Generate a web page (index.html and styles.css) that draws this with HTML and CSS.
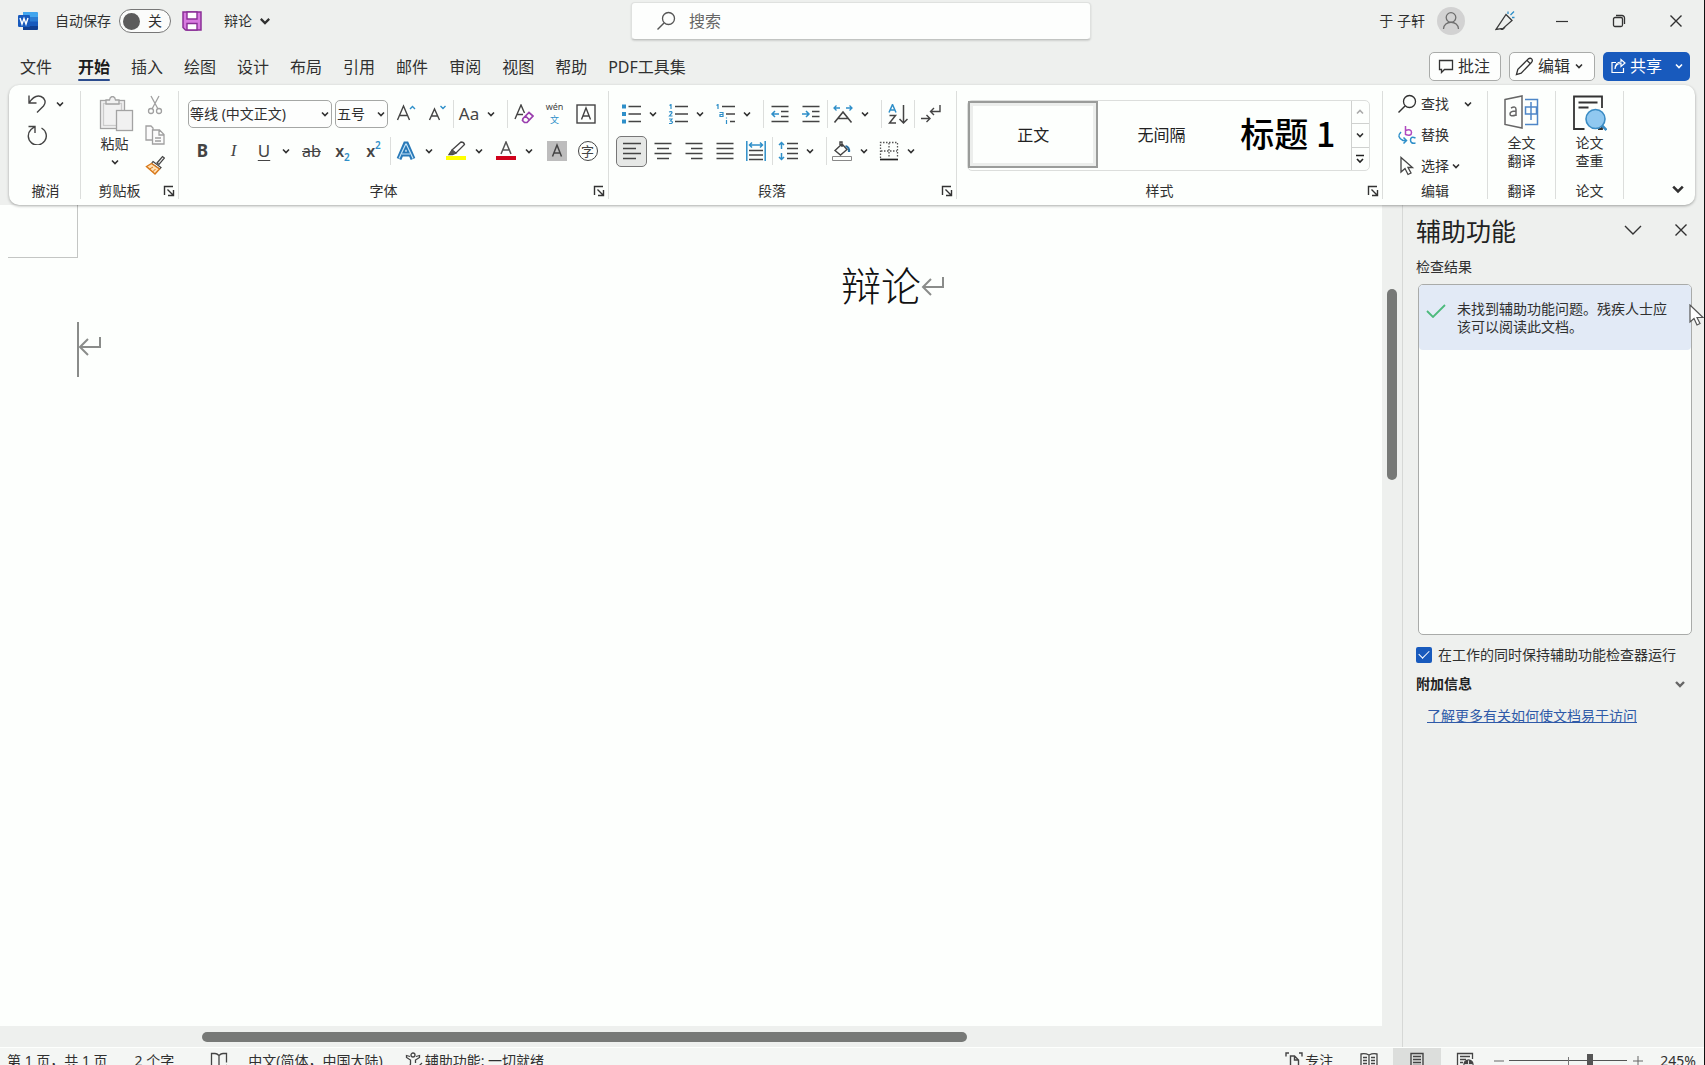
FILE: index.html
```html
<!DOCTYPE html>
<html lang="zh-CN">
<head>
<meta charset="utf-8">
<title>辩论 - Word</title>
<link rel="stylesheet" href="styles.css">
</head>
<body>
<svg class="defs" aria-hidden="true">
  <symbol id="chev" viewBox="0 0 10 10"><path d="M2 3.5 5 6.5 8 3.5" fill="none" stroke="currentColor" stroke-width="1.6"/></symbol>
  <symbol id="launch" viewBox="0 0 12 12"><path d="M1.5 10V1.500H10M4.500 4.500 10 10M10.500 5V10.500H5" fill="none" stroke="currentColor" stroke-width="1.400"/></symbol>
  <symbol id="find" viewBox="0 0 20 20"><path d="M8 12 1.500 18.500" stroke="currentColor" stroke-width="1.400"/><circle cx="12.500" cy="7.500" r="6" fill="none" stroke="currentColor" stroke-width="1.300"/></symbol>
  <symbol id="close" viewBox="0 0 14 14"><path d="M1.500 1.500 12.500 12.500M12.500 1.500 1.500 12.500" stroke="currentColor" stroke-width="1.400"/></symbol>
  <symbol id="mark" viewBox="0 0 24 22"><path d="M22 1V11H2M10 3 2 11 10 19" fill="none" stroke="currentColor" stroke-width="2"/></symbol>
</svg>
<div class="app">
  <header class="titlebar">
    <div class="title-left">
      <svg class="word" viewBox="0 0 20 20"><rect x="5" y="1" width="15" height="18" rx="1.500" fill="#2b7cd3"/><path d="M5 1h13.500A1.500 1.500 0 0 1 20 2.500V6H5z" fill="#41a5ee"/><path d="M5 10.500h15V15H5z" fill="#185abd"/><path d="M5 15h15v2.500a1.500 1.500 0 0 1-1.500 1.500H5z" fill="#103f91"/><rect y="4" width="12" height="12" rx="1.200" fill="#185abd"/><path d="M2 7 4 13 6 7.500 8 13 10 7" fill="none" stroke="#fff" stroke-width="1.400"/></svg>
      <label class="auto" for="autosave">自动保存</label>
      <button class="toggle" id="autosave" type="button" role="switch" aria-checked="false"><i></i><span>关</span></button>
      <button class="plain save" type="button" aria-label="保存"><svg viewBox="0 0 20 20"><path d="M1 1h18v18H3.500L1 16.500z" fill="#d87be0" stroke="#8a2f96" stroke-width="1.500"/><path d="M5 1h10v7H5zM5 12.500h10V19H5z" fill="#fff" stroke="#8a2f96" stroke-width="1.400"/></svg></button>
      <button class="plain docname" type="button">辩论<svg viewBox="0 0 10 10"><use href="#chev"/></svg></button>
    </div>
    <label class="search"><svg viewBox="0 0 20 20"><use href="#find"/></svg><input type="text" placeholder="搜索" aria-label="搜索"></label>
    <div class="title-right">
      <span class="user">于 子轩</span>
      <svg class="avatar" viewBox="0 0 28 28"><circle cx="14" cy="14" r="14" fill="#d2d2d2"/><g fill="none" stroke="#6e6e6e" stroke-width="1.300"><circle cx="14" cy="10.500" r="4.800"/><path d="M6.500 22c0-9 15-9 15 0"/></g></svg>
      <button class="win" type="button" aria-label="画笔"><svg viewBox="0 0 20 20" fill="none" stroke="#3a3a3a" stroke-width="1.300"><path d="M11 3.500 17 9.500 8 17.500 1 18.500zM5.500 17.500q2 2.500 4.500-1.500"/><path d="M13 3V.5M15.500 4 19 .5M17 6.500h2.500" stroke="#2e8fc9"/></svg></button>
      <button class="win" type="button" aria-label="最小化"><svg viewBox="0 0 20 20"><path d="M4 10.500h12" stroke="#333" stroke-width="1.200"/></svg></button>
      <button class="win" type="button" aria-label="还原"><svg viewBox="0 0 20 20" fill="none" stroke="#333" stroke-width="1.300"><rect x="4.500" y="6.500" width="9" height="9" rx="1.500"/><path d="M7 4.500h6a2.500 2.500 0 0 1 2.500 2.500v6"/></svg></button>
      <button class="win" type="button" aria-label="关闭"><svg class="x" viewBox="0 0 14 14"><use href="#close"/></svg></button>
    </div>
  </header>

  <nav class="tabs">
    <button type="button">文件</button>
    <button type="button" class="on">开始</button>
    <button type="button">插入</button>
    <button type="button">绘图</button>
    <button type="button">设计</button>
    <button type="button">布局</button>
    <button type="button">引用</button>
    <button type="button">邮件</button>
    <button type="button">审阅</button>
    <button type="button">视图</button>
    <button type="button">帮助</button>
    <button type="button">PDF工具集</button>
    <div class="actions">
      <button class="act comment" type="button"><svg viewBox="0 0 16 16"><path d="M1.500 2.500h13v9H6.500L3.500 14.500V11.500h-2z" fill="none" stroke="#333" stroke-width="1.300"/></svg>批注</button>
      <button class="act edit" type="button"><svg class="pen" viewBox="0 0 20 20"><path d="M1.500 18.500 3 13 14 2q2-1.500 3.500 0t0 3.500L6.500 17zM12.500 3.500l4 4" fill="none" stroke="#333" stroke-width="1.400"/></svg>编辑<svg class="cv" viewBox="0 0 10 10"><use href="#chev"/></svg></button>
      <button class="act share" type="button"><svg viewBox="0 0 16 16"><path d="M6 4.500H2v10h11.500V10M5 11c.5-4 3-5.500 6-5.500V8.500L15 5 11 1.500V4C7.500 4 5 6.500 5 11z" fill="none" stroke="#fff" stroke-width="1.200"/></svg>共享<svg class="cv" viewBox="0 0 10 10"><use href="#chev"/></svg></button>
    </div>
  </nav>

  <section class="ribbon">
    <div class="group undo">
      <div class="stack">
        <div class="line"><button class="small" type="button" aria-label="撤消"><svg viewBox="0 0 20 20"><path d="M2 1.500V9h7.500M2 9C5.500 3.500 10 1 14 2.500s5.500 6 2.500 9.500L10 18.500" fill="none" stroke="#444" stroke-width="1.400"/></svg></button><button class="cvb" type="button" aria-label="更多"><svg><use href="#chev"/></svg></button></div>
        <div class="line"><button class="small" type="button" aria-label="重做"><svg viewBox="0 0 20 20"><path d="M1.500 1.500H8V8M14.500 3A9 9 0 1 1 4 4.500L8 1.500" fill="none" stroke="#444" stroke-width="1.400"/></svg></button></div>
      </div>
      <div class="cap"><span>撤消</span></div>
    </div>

    <div class="group clip">
      <div class="side">
        <button class="big" type="button"><svg class="i35" viewBox="0 0 35 36" fill="#f1f1f1" stroke="#a3a3a3" stroke-width="1.300"><rect x="1.500" y="4.500" width="24" height="28"/><rect x="4.500" y="7.500" width="18" height="22" stroke="#ccc"/><path d="M7 8V4h3.500q.5-3.500 3-3.500T16.500 4H20v4z"/><rect x="17.500" y="14.500" width="16" height="20"/></svg><span>粘贴</span><svg class="cv" viewBox="0 0 10 10"><use href="#chev"/></svg></button>
        <div class="stack">
          <button class="small" type="button" aria-label="剪切"><svg viewBox="0 0 20 20" fill="none" stroke="#a0a0a0" stroke-width="1.300"><path d="M6 1 13 14M14 1 7 14"/><circle cx="6" cy="16" r="2.500"/><circle cx="14" cy="16" r="2.500"/></svg></button>
          <button class="small" type="button" aria-label="复制"><svg viewBox="0 0 20 20" fill="#fbfbfb" stroke="#a0a0a0" stroke-width="1.300"><path d="M7 15H1V1h5l2 2v2"/><path d="M7.500 5h7L19 9.500V19H7.500zM14 5v5h5M10 13h6M10 16h6"/></svg></button>
          <button class="small" type="button" aria-label="格式刷"><svg viewBox="0 0 20 20"><path d="M12 8 17.500 1.500 19.500 3 14 9.500z" fill="#eee" stroke="#444" stroke-width="1.200"/><path d="M8 6.500 16 12.500 14.500 14 6.500 8.500z" fill="#fff" stroke="#444" stroke-width="1.200"/><path d="M6.500 8.500 14.500 14 10 19 1.500 11.500z" fill="#ffe0b5" stroke="#d9791a" stroke-width="1.400"/><path d="M4.500 14 8 12M7.500 17l3-3" stroke="#d9791a"/></svg></button>
        </div>
      </div>
      <div class="cap"><span>剪贴板</span><button class="launch" type="button" aria-label="剪贴板设置"><svg><use href="#launch"/></svg></button></div>
    </div>

    <div class="group font">
      <div class="rows">
        <div class="row first">
          <button class="combo name" type="button" role="combobox" aria-label="字体">等线 (中文正文)<svg><use href="#chev"/></svg></button>
          <button class="combo size" type="button" role="combobox" aria-label="字号">五号<svg><use href="#chev"/></svg></button>
          <button class="ib" type="button" aria-label="增大字号"><svg viewBox="0 0 20 20" fill="none" stroke="#444" stroke-width="1.400"><path d="M1.500 16 7.500 2 13.500 16M3.500 11.500h8"/><path d="M14 5 16.500 2.500 19 5" stroke="#2e8fc9"/></svg></button>
          <button class="ib" type="button" aria-label="减小字号"><svg viewBox="0 0 20 20" fill="none" stroke="#444" stroke-width="1.400"><path d="M2.500 16 7.500 5 12.500 16M4.500 12h6"/><path d="M13.500 2 16 4.500 18.500 2" stroke="#2e8fc9"/></svg></button>
          <i class="sep"></i>
          <div class="split"><button class="ib t17" type="button">Aa</button><button class="cvb" type="button" aria-label="更多"><svg><use href="#chev"/></svg></button></div>
          <i class="sep"></i>
          <button class="ib" type="button" aria-label="清除格式"><svg viewBox="0 0 20 20" fill="none" stroke="#444" stroke-width="1.400"><path d="M1 15 7 1 10.500 9M3 10.500h6"/><path d="M9 14.500 15 8.500 19 12 13 18.500H10.500L8.500 16.500zM11.500 12l4 4" stroke="#9a3fae" stroke-width="1.700"/></svg></button>
          <button class="ib pinyin" type="button"><span>wén</span><b>文</b></button>
          <button class="ib" type="button" aria-label="字符边框"><svg viewBox="0 0 20 20" fill="none" stroke="#444" stroke-width="1.400"><rect x="1" y="1" width="18" height="18"/><path d="M5.500 15.500 10 4 14.500 15.500M7 12h6"/></svg></button>
        </div>
        <div class="row">
          <button class="ib t17 bold" type="button">B</button>
          <button class="ib t17 ital" type="button">I</button>
          <div class="split"><button class="ib t17 under" type="button">U</button><button class="cvb" type="button" aria-label="更多"><svg><use href="#chev"/></svg></button></div>
          <button class="ib t16 strike" type="button">ab</button>
          <button class="ib script" type="button">x<sub>2</sub></button>
          <button class="ib script" type="button">x<sup>2</sup></button>
          <i class="sep"></i>
          <div class="split wide"><button class="ib" type="button" aria-label="文本效果"><svg viewBox="0 0 20 20" fill="none"><path d="M3 18 9.500 3h1L17 18M5.500 13h9" stroke="#2879b8" stroke-width="5"/><path d="M3 17.500 9.700 3h.6L17 17.500M6 13h8" stroke="#c6e4f7" stroke-width="1.200"/></svg></button><button class="cvb" type="button" aria-label="更多"><svg><use href="#chev"/></svg></button></div>
          <div class="split wide"><button class="ib" type="button" aria-label="突出显示"><svg viewBox="0 0 20 20"><path d="M0 15h20v4H0z" fill="#ff0"/><path d="M6 9 15 1q3 0 3.500 2.500L10 12zM6 9l-3 4.500h3.500L10 12z" fill="#fff" stroke="#444" stroke-width="1.300"/><path d="M6 9 3 13.500h3.500L10 12z" fill="#555"/></svg></button><button class="cvb" type="button" aria-label="更多"><svg><use href="#chev"/></svg></button></div>
          <div class="split wide"><button class="ib" type="button" aria-label="字体颜色"><svg viewBox="0 0 20 20"><path d="M0 15h20v4H0z" fill="#d0021b"/><path d="M5 13 10 1 15 13M7 9h6" fill="none" stroke="#555" stroke-width="1.500"/></svg></button><button class="cvb" type="button" aria-label="更多"><svg><use href="#chev"/></svg></button></div>
          <button class="ib" type="button" aria-label="字符底纹"><svg viewBox="0 0 20 20"><path d="M0 0h20v20H0z" fill="#bdbdbd"/><path d="M5.500 15.500 10 4 14.500 15.500M7 12h6" fill="none" stroke="#444" stroke-width="1.500"/></svg></button>
          <button class="ib" type="button"><span class="ring">字</span></button>
        </div>
      </div>
      <div class="cap"><span>字体</span><button class="launch" type="button" aria-label="字体设置"><svg><use href="#launch"/></svg></button></div>
    </div>

    <div class="group para">
      <div class="rows">
        <div class="row">
          <div class="split"><button class="ib" type="button" aria-label="项目符号"><svg viewBox="0 0 20 20"><path d="M7.500 2.500H20M7.500 10H20M7.500 17.500H20" stroke="#444" stroke-width="1.500"/><path d="M1 .5h4v4H1zM1 8h4v4H1zM1 15.500h4v4H1z" fill="#2e8fc9"/></svg></button><button class="cvb" type="button" aria-label="更多"><svg><use href="#chev"/></svg></button></div>
          <div class="split"><button class="ib" type="button" aria-label="编号"><svg viewBox="0 0 20 20"><path d="M7 2.500H20M7 10H20M7 17.500H20" stroke="#444" stroke-width="1.500"/><path d="M1.500 1.500 3 .5V5M1 8q3-1 3 .8L1.500 12H4.500M1 15h3L2.500 17Q6 17.500 3.500 19.500H1" fill="none" stroke="#2e8fc9" stroke-width="1.200"/></svg></button><button class="cvb" type="button" aria-label="更多"><svg><use href="#chev"/></svg></button></div>
          <div class="split"><button class="ib" type="button" aria-label="多级列表"><svg viewBox="0 0 20 20"><path d="M7 2.500H20M11 10H20M15 17.500H20" stroke="#444" stroke-width="1.500"/><path d="M1.500 1.500 3 .5V5M4.500 8.500h3.500V12.500H5V10.500h3M11.500 16V20M11.500 13.500v1" fill="none" stroke="#2e8fc9" stroke-width="1.200"/></svg></button><button class="cvb" type="button" aria-label="更多"><svg><use href="#chev"/></svg></button></div>
          <i class="sep"></i>
          <button class="ib" type="button" aria-label="减少缩进"><svg viewBox="0 0 20 20" fill="none" stroke="#444" stroke-width="1.500"><path d="M1.500 2.500h17M11 7.500h7.500M11 12.500h7.500M1.500 17.500h17"/><path d="M9 10H2M5 7 2 10l3 3" stroke="#2e8fc9"/></svg></button>
          <button class="ib" type="button" aria-label="增加缩进"><svg viewBox="0 0 20 20" fill="none" stroke="#444" stroke-width="1.500"><path d="M1.500 2.500h17M11 7.500h7.500M11 12.500h7.500M1.500 17.500h17"/><path d="M1 10h7M5 7l3 3-3 3" stroke="#2e8fc9"/></svg></button>
          <i class="sep"></i>
          <div class="split"><button class="ib" type="button" aria-label="中文版式"><svg viewBox="0 0 20 20" fill="none" stroke="#444" stroke-width="1.600"><path d="M1.500 18.500 10 8l8.500 10.500M5 14.500h10"/><path d="M7 4H1M3.500 1.500 1 4l2.500 2.500M13 4h6M16.500 1.500 19 4l-2.500 2.500" stroke="#2e8fc9" stroke-width="1.300"/></svg></button><button class="cvb" type="button" aria-label="更多"><svg><use href="#chev"/></svg></button></div>
          <i class="sep"></i>
          <button class="ib" type="button" aria-label="排序"><svg viewBox="0 0 20 20" fill="none" stroke="#444" stroke-width="1.500"><path d="M1.500 11.500h6L1.500 19h6.500M15.500 1v18M11.500 15l4 4 4-4"/><path d="M1 8.500 4.500.5 8 8.500M2.500 6h4" stroke="#2e8fc9"/></svg></button>
          <i class="sep"></i>
          <button class="ib" type="button" aria-label="显示编辑标记"><svg viewBox="0 0 20 20" fill="none" stroke="#444" stroke-width="1.400"><path d="M19 1v6.500h-9M13 4 9.500 7.500 13 11M0 14.500h9M5.500 11 9 14.500 5.500 18"/></svg></button>
        </div>
        <div class="row">
          <button class="ib sel" type="button" aria-label="左对齐"><svg viewBox="0 0 20 20"><path d="M1 2.500h18M1 7.500h13M1 12.500h18M1 17.500h13" stroke="#444" stroke-width="1.500"/></svg></button>
          <button class="ib" type="button" aria-label="居中"><svg viewBox="0 0 20 20"><path d="M1.500 2.500h17M4 7.500h12M1.500 12.500h17M4 17.500h12" stroke="#444" stroke-width="1.500"/></svg></button>
          <button class="ib" type="button" aria-label="右对齐"><svg viewBox="0 0 20 20"><path d="M1.500 2.500h17M7 7.500h11.500M1.500 12.500h17M7 17.500h11.500" stroke="#444" stroke-width="1.500"/></svg></button>
          <button class="ib" type="button" aria-label="两端对齐"><svg viewBox="0 0 20 20"><path d="M1.500 2.500h17M1.500 7.500h17M1.500 12.500h17M1.500 17.500h17" stroke="#444" stroke-width="1.500"/></svg></button>
          <button class="ib" type="button" aria-label="分散对齐"><svg viewBox="0 0 20 20" fill="none" stroke="#444" stroke-width="1.500"><path d="M3 9.500h14M3 14h14M3 18.500h14"/><path d="M.8 0v20M19.200 0v20M3.500 4h13M6 1.500 3.500 4 6 6.500M14 1.500 16.500 4 14 6.500" stroke="#2e8fc9"/></svg></button>
          <i class="sep"></i>
          <div class="split"><button class="ib" type="button" aria-label="行距"><svg viewBox="0 0 20 20" fill="none" stroke="#444" stroke-width="1.500"><path d="M9 2.500h11M9 7.500h11M9 12.500h11M9 17.500h11"/><path d="M3.500 8V1.500M1 4l2.500-2.500L6 4M3.500 12v6.500M1 16l2.500 2.500L6 16" stroke="#2e8fc9"/></svg></button><button class="cvb" type="button" aria-label="更多"><svg><use href="#chev"/></svg></button></div>
          <i class="sep"></i>
          <div class="split"><button class="ib" type="button" aria-label="底纹"><svg viewBox="0 0 20 20" fill="none" stroke="#444" stroke-width="1.400"><path d="M.5 15.500h19v4H.5z" stroke="#888" stroke-width="1"/><path d="M3 9.500 10 3l5 5.500L8.500 14zM10 6V1H8v4"/><path d="M13.500 5q4 1 3.500 6" stroke="#2e6f9e" stroke-width="2.200"/></svg></button><button class="cvb" type="button" aria-label="更多"><svg><use href="#chev"/></svg></button></div>
          <div class="split"><button class="ib" type="button" aria-label="边框"><svg viewBox="0 0 20 20" fill="none" stroke="#555" stroke-width="1.300"><path d="M1.500 17V1.500h17V17M10 2v15M2 10h16" stroke-dasharray="1.500 1.500"/><path d="M1 18.500h18" stroke="#222" stroke-width="1.700"/></svg></button><button class="cvb" type="button" aria-label="更多"><svg><use href="#chev"/></svg></button></div>
        </div>
      </div>
      <div class="cap"><span>段落</span><button class="launch" type="button" aria-label="段落设置"><svg><use href="#launch"/></svg></button></div>
    </div>

    <div class="group styles">
      <div class="gallery">
        <button class="style on" type="button">正文</button>
        <button class="style" type="button">无间隔</button>
        <button class="style h1" type="button">标题 1</button>
        <div class="scroller">
          <button type="button" aria-label="上一行" class="up"><svg viewBox="0 0 10 10"><use href="#chev"/></svg></button>
          <button type="button" aria-label="下一行"><svg viewBox="0 0 10 10"><use href="#chev"/></svg></button>
          <button type="button" aria-label="其他"><svg viewBox="0 0 10 10"><path d="M1 1.500h8M2 5 5 8 8 5" fill="none" stroke="#222" stroke-width="1.600"/></svg></button>
        </div>
      </div>
      <div class="cap"><span>样式</span><button class="launch" type="button" aria-label="样式设置"><svg><use href="#launch"/></svg></button></div>
    </div>

    <div class="group find">
      <div class="stack">
        <div class="line"><button class="small text" type="button"><svg viewBox="0 0 20 20"><use href="#find"/></svg>查找</button><button class="cvb far" type="button" aria-label="更多"><svg><use href="#chev"/></svg></button></div>
        <div class="line"><button class="small text" type="button"><svg viewBox="0 0 20 20" fill="none" stroke-width="1.500"><path d="M8.500 1v9M8.500 5.500q6-2 6 2t-6 2" stroke="#b04ac0"/><path d="M4 7Q-1 12 6 15.500h3M6.500 12.500l3 3-3 3M18.500 13q-5-2-5 2t5 3" stroke="#2e8fc9"/></svg>替换</button></div>
        <div class="line"><button class="small text" type="button"><svg viewBox="0 0 20 20"><path d="M4 1.500V16l4-3.500 3 6 3-1.500-3-5.500h4.500z" fill="none" stroke="#444" stroke-width="1.300"/></svg>选择</button><button class="cvb" type="button" aria-label="更多"><svg><use href="#chev"/></svg></button></div>
      </div>
      <div class="cap"><span>编辑</span></div>
    </div>

    <div class="group one">
      <button class="big" type="button"><svg class="i35" viewBox="0 0 35 36" fill="none" stroke="#666" stroke-width="1.500"><path d="M1 4.500 18 1v32L1 29.500z"/><path d="M7 13q5-2.500 5 1.500v6.500M12 16q-6 0-6 3t6 1" /><path d="M21 4.500h12.500v25H21M21.500 12h11v7h-11zM27 7v18" stroke="#4e86c8"/></svg><span>全文<br>翻译</span></button>
      <div class="cap"><span>翻译</span></div>
    </div>

    <div class="group one">
      <button class="big" type="button"><svg class="i35" viewBox="0 0 35 36" fill="none" stroke="#333" stroke-width="1.800"><path d="M30 13V1.500H2V34H12.500M26 34h4v-3M6.500 7.500h19M6.500 12.500h10"/><circle cx="23.500" cy="24" r="9.500" fill="#90c8f0" stroke="#3b8cc4" stroke-width="1.600"/><path d="m30 30.500 4.500 4.500" stroke="#3b8cc4" stroke-width="2.600"/></svg><span>论文<br>查重</span></button>
      <div class="cap"><span>论文</span></div>
    </div>

    <button class="fold" type="button" aria-label="折叠功能区"><svg viewBox="0 0 10 10"><use href="#chev"/></svg></button>
  </section>

  <main class="work">
    <div class="canvas">
      <div class="page">
        <div class="corner"></div>
        <div class="content">
          <h1>辩论<svg class="mark"><use href="#mark"/></svg></h1>
          <p><i class="caret"></i><svg class="mark"><use href="#mark"/></svg></p>
        </div>
      </div>
      <div class="vbar"><i></i></div>
      <div class="hbar"><i></i></div>
    </div>
    <aside class="pane">
      <div class="pane-head">
        <h2>辅助功能</h2>
        <button type="button" aria-label="选项"><svg viewBox="0 0 18 18"><path d="M1 5 9 13 17 5" fill="none" stroke="#333" stroke-width="1.400"/></svg></button>
        <button type="button" aria-label="关闭窗格"><svg class="x" viewBox="0 0 14 14"><use href="#close"/></svg></button>
      </div>
      <h3>检查结果</h3>
      <div class="results">
        <div class="result"><svg viewBox="0 0 20 14"><path d="M1 7l6 6L19 1" fill="none" stroke="#4cba7c" stroke-width="1.800"/></svg><p>未找到辅助功能问题。残疾人士应该可以阅读此文档。</p></div>
      </div>
      <label class="keep"><input type="checkbox" checked>在工作的同时保持辅助功能检查器运行</label>
      <button class="more" type="button">附加信息<svg viewBox="0 0 10 10"><path d="M1 3 5 7 9 3" fill="none" stroke="#666" stroke-width="2.400"/></svg></button>
      <a class="learn" href="#help">了解更多有关如何使文档易于访问</a>
      <svg class="pointer" viewBox="0 0 16 22"><path d="M1 1v17l4-3.500 3 6.500 3-1.500-3-6h6z" fill="#fff" stroke="#555" stroke-width="1.200"/></svg>
    </aside>
  </main>

  <footer class="status">
    <span class="s-page">第 1 页，共 1 页</span>
    <span class="s-count">2 个字</span>
    <svg class="s-book" viewBox="0 0 18 18" fill="none" stroke="#444" stroke-width="1.300"><path d="M9 16V3.500Q7 1.500 5 1.500H1.500v13H9M9 3.500q2-2 4-2h3.500v9M11 15l2 2 4-4"/></svg>
    <span class="s-lang">中文(简体，中国大陆)</span>
    <span class="s-acc"><svg viewBox="0 0 18 18" fill="none" stroke="#444" stroke-width="1.300"><circle cx="8" cy="3" r="2"/><path d="M5 4.500 1.500 3.500v2L5.500 8v4l-2 5M11 4.500l3.500-1v2L10.500 8v3M10 14l2 2 5-5"/></svg>辅助功能: 一切就绪</span>
    <div class="s-right">
      <button class="focus" type="button"><svg viewBox="0 0 18 18" fill="none" stroke="#444" stroke-width="1.400"><path d="M1 4.500V1h3M14 1h3v3.500M5.500 17V4h4l4 4v9zM9.500 4v4h4"/></svg>专注</button>
      <button class="view" type="button" aria-label="阅读视图"><svg viewBox="0 0 18 18" fill="none" stroke="#444" stroke-width="1.300"><path d="M9 16V3Q5 1 1 2v13q4-1 8 1 4-2 8-1V2Q13 1 9 3M3 5.500h4M3 8.500h4M3 11.500h4M11 5.500h4M11 8.500h4M11 11.500h4"/></svg></button>
      <button class="view on" type="button" aria-label="页面视图"><svg viewBox="0 0 18 18" fill="none" stroke="#444" stroke-width="1.400"><path d="M3 1.500h12v15H3zM5 4.500h8M5 7.500h8M5 10.500h8M5 13.500h8"/></svg></button>
      <button class="view" type="button" aria-label="Web 视图"><svg viewBox="0 0 18 18" fill="none" stroke="#444" stroke-width="1.300"><path d="M6 16H1.500V1.500h15V7M4 4.500h10M4 7.500h6M4 10.500h3"/><circle cx="12.500" cy="12.500" r="4.500" fill="#444"/><path d="M8.500 12.500h8M12.500 8.500v8" stroke="#ddd" stroke-width="1"/></svg></button>
      <button class="zm" type="button" aria-label="缩小"><svg viewBox="0 0 10 10"><path d="M0 5h10" stroke="#666"/></svg></button>
      <input class="zoom" type="range" min="0" max="100" value="69" aria-label="缩放">
      <button class="zm" type="button" aria-label="放大"><svg viewBox="0 0 10 10"><path d="M0 5h10M5 0v10" stroke="#666"/></svg></button>
      <span class="pct">245%</span>
    </div>
  </footer>
</div>
</body>
</html>
```
FILE: styles.css
```css
* { box-sizing: border-box; }
html { height: 100%; }
body {
  margin: 0;
  height: 100%;
  overflow: hidden;
  background: #eef0ee;
  color: #303030;
  font: 14px/18px "Noto Sans", "Noto Sans CJK SC", sans-serif;
}
.defs { display: none; }
svg { display: block; flex: none; }
button { border: 0; padding: 0; margin: 0; background: none; color: inherit; font: inherit; }
h1, h2, h3, p { margin: 0; font-weight: 400; }

.app {
  display: flex;
  flex-direction: column;
  height: calc(100vh + 8px);
  border-right: 1px solid #111;
}

/* Title bar */
.titlebar { display: grid; grid-template-columns: 1fr 460px 1fr; align-items: center; height: 43px; padding: 0 0 1px 18px; flex: none; }
.title-left { display: flex; align-items: center; }
.word { width: 20px; height: 20px; }
.auto { margin-left: 17px; }
.toggle { display: flex; align-items: center; justify-content: space-between; width: 52px; height: 24px; margin-left: 8px; padding: 0 8px 0 3px; border: 1px solid #777; border-radius: 12px; background: #fbfcfb; }
.toggle i { width: 17px; height: 17px; border-radius: 50%; background: #5c5c5c; }
.save { margin-left: 11px; }
.save svg { width: 20px; height: 20px; }
.docname { display: flex; align-items: center; margin-left: 22px; gap: 6px; }
.docname svg { width: 14px; height: 14px; }
.search { display: flex; align-items: center; height: 38px; padding-left: 24px; gap: 11px; border-radius: 4px; background: #fdfefd; border: 1px solid #dfe1df; border-bottom-color: #c2c4c2; box-shadow: 0 1px 2px #0002; color: #555; }
.search svg { width: 20px; height: 20px; }
.search input { flex: 1; min-width: 0; border: 0; outline: 0; background: none; font: inherit; font-size: 16px; color: #444; }
.search input::placeholder { color: #666; opacity: 1; }
.title-right { display: flex; align-items: center; justify-content: flex-end; }
.avatar { width: 28px; height: 28px; margin: 0 12px; }
.win { display: flex; align-items: center; justify-content: center; width: 57px; height: 40px; }
.win:first-of-type { width: 56px; }
.win svg { width: 20px; height: 20px; }
.win svg.x, .pane svg.x { width: 14px; height: 14px; }

/* Tabs */
.tabs { display: flex; align-items: center; height: 42px; padding: 5px 14px 0 20px; gap: 21px; font-size: 16px; line-height: 22px; flex: none; }
.tabs > button { position: relative; height: 28px; margin-bottom: 1px; padding-top: 2px; }
.tabs > button:first-child { margin-right: 5px; }
.tabs > .on { font-weight: 700; color: #1c1c1c; }
.tabs > .on::after { content: ""; position: absolute; left: 0; right: 0; bottom: -1px; height: 2px; border-radius: 1px; background: #2a4b8d; }
.actions { display: flex; gap: 8px; margin-left: auto; }
.act { display: flex; align-items: center; height: 29px; margin-bottom: 1px; gap: 4px; border: 1px solid #a9aba9; border-radius: 5px; background: #fdfefd; }
.act svg { width: 16px; height: 16px; }
.act .cv { width: 10px; height: 10px; }
.comment { width: 72px; padding-left: 8px; }
.edit { width: 86px; padding-left: 5px; }
.act .pen { width: 19px; height: 19px; }
.share { width: 87px; padding-left: 7px; border: 0; background: #185abd; color: #fff; }
.share .cv { margin-left: 8px; }

/* Ribbon */
.ribbon { position: relative; z-index: 1; display: flex; flex: none; height: 120px; margin: 0 9px; padding: 6px 0; border-radius: 10px; background: #fdfffd; box-shadow: 0 1px 3px #0005; }
.group { display: flex; flex-direction: column; justify-content: space-between; border-right: 1px solid #dcdedc; }
.cap { position: relative; display: flex; justify-content: center; height: 20px; line-height: 20px; margin-bottom: -2px; }
.launch { position: absolute; right: 3px; top: 4px; color: #333; }
.launch svg { width: 12px; height: 12px; }
.stack { display: flex; flex-direction: column; gap: 11px; padding-top: 3px; }
.line { display: flex; align-items: center; }
.small { display: flex; align-items: center; height: 20px; color: #303030; }
.small svg { width: 20px; height: 20px; }
.text { gap: 4px; }
.cvb { display: flex; align-items: center; justify-content: center; width: 14px; height: 20px; }
.cvb svg, .combo svg, .cv { width: 10px; height: 10px; }
.big { display: flex; flex-direction: column; align-items: center; }
.big .i35 { width: 35px; height: 36px; }
.undo { width: 72px; }
.undo .stack { padding-left: 18px; }
.undo .cvb { margin-left: 6px; }
.undo .cap { padding-left: 2px; }
.clip { width: 98px; }
.side { display: flex; gap: 11px; padding-left: 18px; }
.side .big { padding-top: 5px; }
.side .big .cv { margin-top: 4px; }
.side .i35 { margin-bottom: 3px; }
.side .big .cv, .side .big span { margin-right: 4px; }
.side .stack { padding-top: 4px; gap: 10px; }
.clip .cap { padding-right: 20px; }
.font { width: 430px; padding-left: 8px; }
.para { width: 348px; padding-left: 7px; }
.font .cap, .para .cap { padding-right: 20px; margin-left: -8px; }
.rows { padding-top: 9px; display: flex; flex-direction: column; gap: 9px; }
.row { display: flex; align-items: center; height: 28px; }
.first { padding-left: 1px; }
.combo { display: flex; align-items: center; justify-content: space-between; height: 28px; padding: 0 1px; border: 1px solid #a5a7a5; border-radius: 5px; background: #fdfefd; white-space: nowrap; }
.name { width: 144px; margin-right: 3px; }
.size { width: 53px; margin-right: 2px; }
.ib { display: flex; align-items: center; justify-content: center; width: 31px; height: 28px; flex: none; color: #444; }
.ib svg { width: 20px; height: 20px; }
.split { display: flex; align-items: center; width: 47px; }
.split .ib { width: 30px; }
.wide { width: 50px; }
.wide .cvb { margin-left: 1px; }
.sep { width: 1px; height: 28px; margin-left: 1px; background: #dcdedc; flex: none; }
.split + .sep { margin-left: 6px; }
.t17 { font-size: 17px; }
.t16 { font-size: 16px; }
.bold { font-weight: 700; }
.ital { font-style: italic; font-family: "Liberation Serif", serif; }
.under { text-decoration: underline; text-underline-offset: 3px; }
.strike { text-decoration: line-through; }
.script { font-size: 16px; font-weight: 600; }
.script sub, .script sup { font-size: 10px; line-height: 10px; color: #2e8fc9; }
.script sub { padding-top: 12px; }
.script sup { padding-bottom: 12px; }
.pinyin { flex-direction: column; font-size: 9px; line-height: 12px; }
.pinyin b { font-weight: 400; line-height: 14px; color: #2e8fc9; }
.pinyin b, .pinyin span { display: block; }
.ring { display: flex; align-items: center; justify-content: center; width: 20px; height: 20px; border: 1px solid #444; border-radius: 50%; font-size: 13px; }
.sel::before { content: ""; position: absolute; width: 29px; height: 29px; border: 1px solid #777; border-radius: 5px; background: #e6e8e6; }
.sel svg { position: relative; }

.styles { flex: 1; padding: 9px 12px 0 10px; }
.gallery { display: flex; height: 71px; border: 1px solid #dcdedc; border-radius: 5px; }
.style { flex: 1; height: 67px; color: #222; font-size: 16px; }
.style.on { border: 2px solid #9a9c9a; outline: 3px solid #eceeec; outline-offset: -5px; }
.h1 { padding-bottom: 4px; font-size: 34px; line-height: 40px; font-weight: 500; color: #000; white-space: nowrap; font-family: "Noto Sans CJK SC", sans-serif; }
.scroller { display: flex; flex-direction: column; width: 18px; border-left: 1px solid #cfd1cf; }
.scroller button { display: flex; flex: 1; align-items: center; justify-content: center; }
.scroller button + button { border-top: 1px solid #cfd1cf; }
.scroller svg { width: 10px; height: 10px; }
.up svg { transform: rotate(180deg); color: #aaa; }
.styles .cap { padding-right: 30px; margin-right: -12px; }
.find { width: 105px; }
.find .stack { padding-left: 14px; }
.find .far { margin-left: 12px; }
.one { width: 68px; }
.one .big { padding-top: 4px; gap: 3px; }
.fold { align-self: flex-end; margin-left: 46px; margin-right: 9px; margin-bottom: 2px; }
.fold svg { width: 16px; height: 16px; }

/* Workspace */
.work { display: flex; flex: 1; min-height: 0; }
.canvas { display: grid; grid-template: 1fr 21px / 1fr 20px; flex: 1; min-width: 0; }
.page { position: relative; overflow: hidden; background: #fdfffd; }
.corner { width: 70px; height: 53px; margin-left: 8px; border-right: 1px solid #c4c6c4; border-bottom: 1px solid #c4c6c4; }
.content { width: 1632px; margin-left: 77px; }
.mark { display: inline-block; width: 24px; height: 22px; color: #8a8c8a; }
.content h1 { height: 60px; font-size: 40px; line-height: 56px; font-weight: 300; text-align: center; color: #111; }
.content h1 .mark { margin-bottom: 3px; }
.content p { display: flex; align-items: center; height: 56px; margin-top: 3px; }
.caret { width: 2px; height: 55px; background: #8a8c8a; }
.content p .mark { margin-left: -1px; margin-top: -4px; }
.vbar { padding: 84px 5px 0; }
.vbar i { display: block; height: 191px; border-radius: 5px; background: #777977; }
.hbar { padding: 6px 0 0 202px; }
.hbar i { display: block; width: 765px; height: 10px; border-radius: 5px; background: #777977; }

.pane { position: relative; width: 302px; padding: 0 12px 0 13px; border-left: 1px solid #d6d8d6; }
.pane-head { display: flex; align-items: center; height: 52px; }
.pane-head h2 { flex: 1; font-size: 25px; line-height: 36px; color: #222; }
.pane-head button { padding: 8px; margin-bottom: 3px; }
.pane-head button + button { margin-left: 16px; margin-right: -4px; }
.pane-head svg { width: 18px; height: 18px; }
.pane h3 { font-size: 14px; line-height: 18px; padding-top: 1px; }
.results { height: 351px; margin: 8px 0 0 2px; border: 1px solid #a9aba9; border-radius: 5px; background: #fdfffd; }
.result { display: flex; height: 65px; padding: 15px 14px 0 7px; gap: 11px; border-radius: 4px; background: #e2eaf6; }
.result svg { width: 20px; height: 14px; margin-top: 4px; }
.result p { flex: 1; }
.keep { display: flex; align-items: center; height: 39px; gap: 6px; white-space: nowrap; }
.keep input { appearance: none; width: 16px; height: 16px; margin: 0; border-radius: 2px; background: #185abd; display: grid; place-items: center; flex: none; }
.keep input::after { content: ""; width: 9px; height: 5px; margin-bottom: 3px; border-left: 1px solid #fff; border-bottom: 1px solid #fff; transform: rotate(-45deg); }
.more { display: flex; align-items: center; justify-content: space-between; width: 100%; height: 20px; padding-right: 7px; font-weight: 700; color: #222; }
.more svg { width: 10px; height: 10px; }
.learn { display: block; margin: 13px 0 0 11px; color: #2f5aa8; white-space: nowrap; }
.pointer { position: absolute; left: 286px; top: 99px; width: 16px; height: 22px; }

/* Status bar */
.status { display: flex; align-items: center; flex: none; height: 26px; padding-left: 7px; border-top: 1px solid #fdfffd; background: #f4f6f4; white-space: nowrap; }
.s-count { margin-left: 27px; }
.s-book { width: 18px; height: 18px; margin-left: 36px; }
.s-lang { margin-left: 20px; }
.s-acc { display: flex; align-items: center; margin-left: 22px; gap: 2px; }
.s-acc svg { width: 18px; height: 18px; }
.s-right { display: flex; align-items: center; height: 26px; margin-left: auto; padding-right: 8px; }
.focus { display: flex; align-items: center; gap: 2px; margin-right: 12px; }
.focus svg, .view svg { width: 18px; height: 18px; }
.view { display: flex; align-items: center; justify-content: center; width: 48px; height: 26px; }
.view.on { background: #dcdedc; }
.zm { margin: 0 5px 0 6px; }
.view + .zm { margin-left: 5px; }
.zm svg { width: 10px; height: 10px; }
.zoom { appearance: none; width: 118px; height: 14px; margin: 0; background: linear-gradient(#777, #777) 50% 50% / 1px 8px no-repeat, linear-gradient(#555, #555) 50% 50% / 100% 1px no-repeat; }
.zoom::-webkit-slider-thumb { appearance: none; width: 6px; height: 14px; background: #555; }
.pct { margin-left: 12px; }
```
